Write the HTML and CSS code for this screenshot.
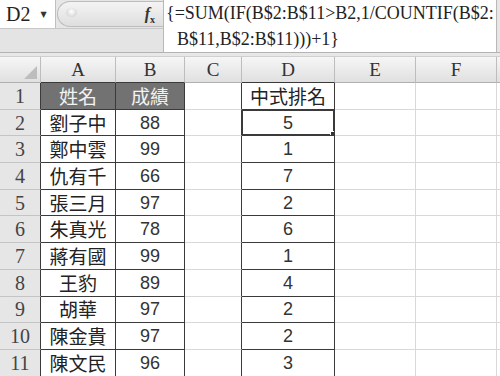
FILE: index.html
```html
<!DOCTYPE html>
<html lang="zh-Hant">
<head>
    <meta charset="UTF-8">
    <title>中式排名</title>
    <link rel="stylesheet" href="styles.css">
</head>
<body>
    <div class="formula-bar">
        <div class="left-tools">
            <div class="tools-row">
                <div class="name-box">D2 <span class="arrow">&#9660;</span></div>
                <div class="pill">
                    <span class="knob"></span>
                    <span class="fx"><i>f</i><sub>x</sub></span>
                </div>
            </div>
            <div class="tools-fill"></div>
        </div>
        <div class="formula">
            <div class="line1">{=SUM(IF(B$2:B$11&gt;B2,1/COUNTIF(B$2:</div>
            <div class="line2">B$11,B$2:B$11)))+1}</div>
        </div>
        <div class="formula-end"></div>
    </div>
    <div class="split"></div>

    <table class="sheet">
        <colgroup>
            <col class="c-rh"><col class="c-a"><col class="c-b"><col class="c-c"><col class="c-d"><col class="c-e"><col class="c-f"><col class="c-g">
        </colgroup>
        <thead>
            <tr>
                <th class="corner"><span class="tri"></span></th>
                <th class="dark-b">A</th>
                <th class="dark-b">B</th>
                <th>C</th>
                <th class="dark-b">D</th>
                <th>E</th>
                <th>F</th>
                <th class="last"></th>
            </tr>
        </thead>
        <tbody id="rows"></tbody>
    </table>

    <script>
        // data for the ranking sheet
        const data = [
            ['姓名', '成績', '中式排名'],
            ['劉子中', '88', '5'],
            ['鄭中雲', '99', '1'],
            ['仇有千', '66', '7'],
            ['張三月', '97', '2'],
            ['朱真光', '78', '6'],
            ['蔣有國', '99', '1'],
            ['王豹', '89', '4'],
            ['胡華', '97', '2'],
            ['陳金貴', '97', '2'],
            ['陳文民', '96', '3']
        ];
        const body = document.getElementById('rows');

        data.forEach((row, i) => {
            const tr = document.createElement('tr');
            const head = i === 0 ? ' head' : '';
            const sel = i === 1 ? ' selected' : '';
            const numCls = i === 0 ? 'cjk' : 'num';
            tr.innerHTML = `
                <th class="rh dark-r">${i + 1}</th>
                <td class="cjk box${head}">${row[0]}</td>
                <td class="${numCls} box${head}">${row[1]}</td>
                <td class="dark-r"></td>
                <td class="${numCls} box${sel}">${row[2]}</td>
                <td></td>
                <td></td>
                <td class="last"></td>
            `;
            body.appendChild(tr);
        });
    </script>
</body>
</html>
```

FILE: styles.css
```css
/* Excel style sheet */
body {
    margin: 0;
    width: 500px;
    height: 376px;
    overflow: hidden;
    background-color: #fff;
    font-family: "Liberation Serif", "DejaVu Serif", serif;
}
.formula-bar {
    display: flex;
    height: 52px;
    background-color: #e6e6e6;
    border-bottom: 1px solid #b4b4b4;
}
.left-tools {
    width: 163px;
    display: flex;
    flex-direction: column;
}
.tools-row {
    display: flex;
    height: 28px;
    border-bottom: 1px solid #c8c8c8;
}
.tools-fill {
    flex: 1;
    background-color: #e4e4e4;
}
.name-box {
    width: 56px;
    background-color: #fff;
    border-right: 1px solid #c0c0c0;
    font-size: 20px;
    line-height: 28px;
    padding-left: 6px;
    box-sizing: border-box;
    color: #222;
}
.arrow {
    font-family: "DejaVu Sans", sans-serif;
    font-size: 8px;
    vertical-align: 4px;
    margin-left: 5px;
    color: #333;
}
.pill {
    flex: 1;
    position: relative;
    margin: 1px 0 1px 1px;
    border: 1px solid #bcbcbc;
    border-right: none;
    border-radius: 14px 0 0 14px;
    background: linear-gradient(#f4f4f4, #dedede);
}
.knob {
    position: absolute;
    left: 8px;
    top: 6px;
    width: 11px;
    height: 9px;
    border-radius: 50%;
    background: radial-gradient(circle at 50% 40%, #fff, #c8c8c8);
}
.fx {
    position: absolute;
    right: 8px;
    top: 3px;
    font-size: 16px;
    font-weight: bold;
    color: #333;
}
.fx sub {
    font-size: 10px;
}
.formula {
    width: 332px;
    overflow: hidden;
    white-space: nowrap;
    background-color: #fff;
    border-left: 1px solid #b8b8b8;
    border-right: 1px solid #b8b8b8;
    font-size: 18px;
    color: #222;
    line-height: 26px;
}
.line1 {
    padding-left: 2px;
}
.line2 {
    padding-left: 13px;
}
.formula-end {
    flex: 1;
}
.split {
    height: 3px;
    background-color: #e8e8e8;
    border-bottom: 1px solid #d0d0d0;
}
.sheet {
    border-collapse: separate;
    border-spacing: 0;
    table-layout: fixed;
    width: 504px;
}
.c-rh { width: 41px; }
.c-a { width: 75px; }
.c-b { width: 69px; }
.c-c { width: 57px; }
.c-d { width: 93px; }
.c-e { width: 81px; }
.c-f { width: 81px; }
.c-g { width: 7px; }
th, td {
    padding: 0;
    border-right: 1px solid #d9d9d9;
    border-bottom: 1px solid #d9d9d9;
    text-align: center;
    overflow: hidden;
    white-space: nowrap;
    line-height: 20px;
}
thead tr {
    height: 26px;
}
thead th {
    background: linear-gradient(#f6f6f6, #e0e0e0);
    border-right-color: #bdbdbd;
    border-bottom-color: #b0b0b0;
    font-weight: normal;
    font-size: 19px;
    color: #333;
}
thead th.dark-b {
    border-bottom-color: #3a3a3a;
}
.corner {
    position: relative;
}
.tri {
    position: absolute;
    right: 3px;
    bottom: 3px;
    width: 0;
    height: 0;
    border-left: 13px solid transparent;
    border-bottom: 13px solid #bdbdbd;
}
tbody tr {
    height: 26.7px;
}
.rh {
    background-color: #e6e6e6;
    border-bottom-color: #c4c4c4;
    font-weight: normal;
    font-size: 20px;
    color: #444;
}
th.rh.dark-r {
    border-right-color: #3a3a3a;
}
td.dark-r {
    border-right-color: #3a3a3a;
}
.box {
    border-right-color: #3a3a3a;
    border-bottom-color: #3a3a3a;
}
.head {
    background-color: #727272;
    color: #f2f2f2;
}
.cjk {
    font-family: "Noto Sans CJK TC", sans-serif;
    font-size: 19px;
    color: #222;
}
.head.cjk {
    color: #f2f2f2;
}
.num {
    font-family: "Liberation Sans", sans-serif;
    font-size: 18px;
    color: #333;
}
.selected {
    position: relative;
    box-shadow: inset 0 0 0 1px #3a3a3a, inset 0 0 0 2px #fff;
}
.selected::after {
    content: "";
    position: absolute;
    right: -3px;
    bottom: -3px;
    width: 5px;
    height: 5px;
    background-color: #333;
    border: 1px solid #fff;
}
.last {
    border-right: none;
}
```
